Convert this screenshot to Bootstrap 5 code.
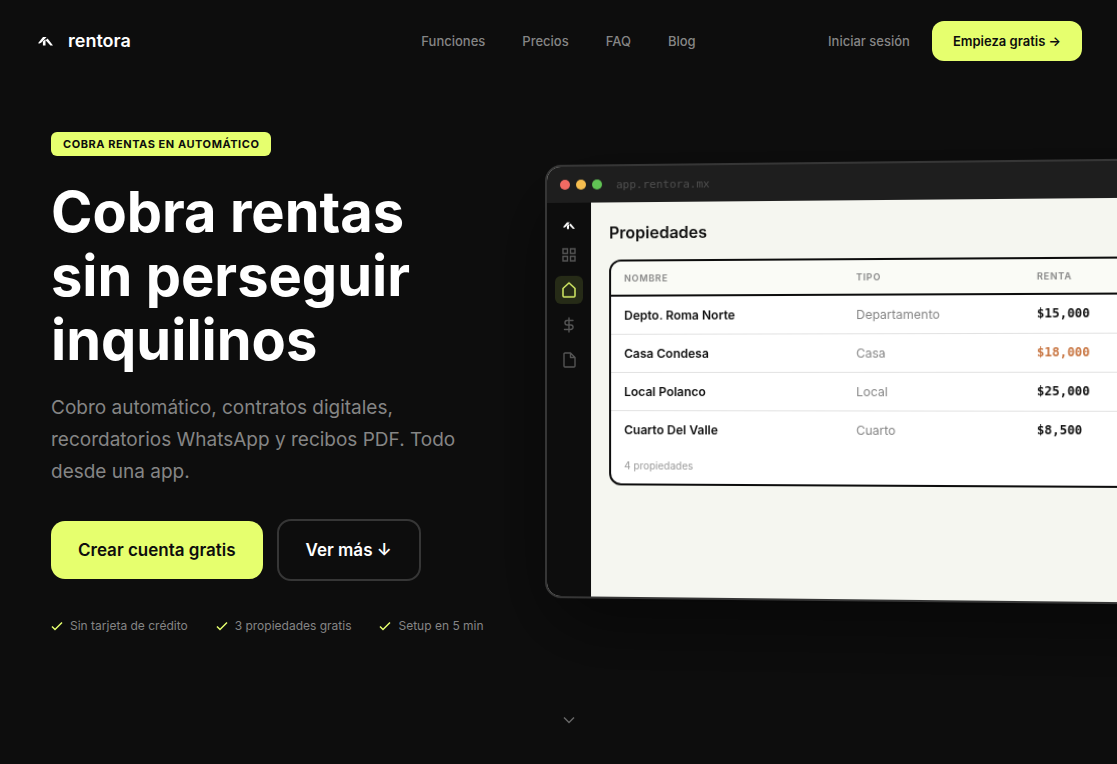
<!DOCTYPE html>
<html lang="es">
<head>
<meta charset="utf-8">
<meta name="viewport" content="width=device-width, initial-scale=1">
<title>Rentora</title>
<link href="https://cdn.jsdelivr.net/npm/bootstrap@5.3.0/dist/css/bootstrap.min.css" rel="stylesheet">
<style>
:root { --ink: #0d0d0d; --lime: #e6ff6e; --paper: #f5f6f0; --mute: #858585; }
body { background: var(--ink); color: #fff; font-family: Inter, sans-serif; }
a { text-decoration: none; }
svg { fill: none; stroke: currentColor; flex: none; display: block; }
.topbar { display: grid; grid-template-columns: 1fr auto 1fr; padding: 21px 35px; }
.topbar .nav-link { font-size: 13px; line-height: 20px; font-weight: 500; color: var(--mute); padding: 0; }
.topbar .nav-link:hover { color: #fff; }
.brandname { font-size: 18px; line-height: 24px; font-weight: 600; color: #fff; gap: 15px; padding-left: 3px; }
.btn-lime { --bs-btn-bg: var(--lime); --bs-btn-color: var(--ink); --bs-btn-hover-bg: #d9f25f; --bs-btn-hover-color: var(--ink); --bs-btn-border-width: 0; font-weight: 600; }
.btn-cta { font-size: 13px; line-height: 20px; padding: 10px 21px; border-radius: 12px; }
.btn-hero { font-size: 17px; line-height: 26px; padding: 16px 27px; border-radius: 14px; font-weight: 600; }
.btn-ghost { --bs-btn-color: #fff; --bs-btn-border-color: #363636; --bs-btn-border-width: 2px; --bs-btn-hover-color: #fff; --bs-btn-hover-border-color: #666; }
.hero { padding: 48px 0 0 51px; }
.pitch { flex: 0 0 46.3%; }
.tagline { background: var(--lime); color: var(--ink); font-size: 11px; line-height: 24px; font-weight: 700; letter-spacing: 0.05em; border-radius: 6px; padding: 0 12px; }
.headline { font-size: 56px; line-height: 64px; font-weight: 700; margin: 24px 0 20px; }
.summary { font-size: 19px; line-height: 32px; color: var(--mute); max-width: 430px; margin-bottom: 31px; }
.perks { font-size: 12px; line-height: 20px; color: var(--mute); gap: 28px; margin-top: 35px; }
.perks li { gap: 7px; }
.perks svg { color: var(--lime); }
.stage { padding-top: 35px; min-width: 0; }
.appframe { width: 720px; height: 433px; border: 2px solid #363636; border-radius: 16px; overflow: hidden; transform: perspective(1200px) rotateY(-3.4deg); transform-origin: left center; box-shadow: 0 30px 80px rgba(0,0,0,.5); background: var(--paper); }
.titlebar { background: #1e1e1e; height: 36px; padding-left: 13px; gap: 6px; font: 11px "DejaVu Sans Mono", monospace; color: #505050; }
.dot { width: 10px; height: 10px; border-radius: 50%; }
.rail { background: var(--ink); color: #555; width: 44px; padding-top: 19px; gap: 7px; }
.railitem { width: 28px; height: 28px; border-radius: 6px; color: inherit; }
.railitem.active { background: #262b17; color: #d6ee66; }
.panel { padding: 18px; color: var(--ink); }
.panel h2 { font-size: 16px; line-height: 24px; font-weight: 600; margin-bottom: 15px; }
.listing { border: 2px solid var(--ink); border-radius: 12px; background: #fff; overflow: hidden; width: 640px; }
.listing table { width: 100%; table-layout: fixed; font-size: 12px; line-height: 17px; }
.listing th, .listing td { padding: 10px 0 10px 13px; font-weight: 400; }
.listing thead th { background: #fafbf6; border-bottom: 2px solid var(--ink); font-size: 9px; line-height: 13px; font-weight: 600; letter-spacing: 0.08em; color: var(--mute); }
.listing tbody tr + tr { border-top: 1px solid #e2e2e2; }
.listing tbody th { font-weight: 600; }
.listing tbody td { color: var(--mute); }
.listing td.rent { font-family: "DejaVu Sans Mono", monospace; font-weight: 700; color: var(--ink); }
.listing td.late { color: #c87541; }
.c-name { width: 228px; } .c-kind { width: 174px; }
.total { font-size: 10px; line-height: 16px; color: #999; padding: 9px 13px 10px; margin: 0; }
.scrolldown { padding: 80px 0 36px 20px; color: #666; }
</style>
</head>
<body>
<svg width="0" height="0" class="position-absolute" aria-hidden="true"><symbol id="roof" viewBox="0 0 15 9"><path fill="currentColor" stroke="none" d="M0 6.200 5 0h3.600L3.400 5.600 1.600 6.600zM4.900 4.400 7.500 2.200V8.600H4.900zM7.600 3.200 9.600 1.600 15 8.400h-2.600L9 4.800z"/></symbol></svg>
<header class="topbar align-items-center">
  <a href="#" class="brandname d-flex align-items-center"><svg width="15" height="9"><use href="#roof"/></svg>rentora</a>
  <nav class="nav" style="gap:37px" aria-label="Principal">
    <a class="nav-link" href="#funciones">Funciones</a><a class="nav-link" href="#precios">Precios</a><a class="nav-link" href="#faq">FAQ</a><a class="nav-link" href="#blog">Blog</a>
  </nav>
  <div class="d-flex align-items-center justify-content-end" style="gap:22px">
    <a class="nav-link" href="#login">Iniciar sesión</a>
    <button class="btn btn-lime btn-cta" type="button">Empieza gratis →</button>
  </div>
</header>
<main class="overflow-hidden">
<section class="hero d-flex align-items-start">
  <div class="pitch">
    <span class="tagline d-inline-block">COBRA RENTAS EN AUTOMÁTICO</span>
    <h1 class="headline">Cobra rentas<br>sin perseguir<br>inquilinos</h1>
    <p class="summary">Cobro automático, contratos digitales, recordatorios WhatsApp y recibos PDF. Todo desde una app.</p>
    <div class="d-flex align-items-center" style="gap:14px">
      <button class="btn btn-lime btn-hero" type="button">Crear cuenta gratis</button>
      <button class="btn btn-ghost btn-hero" type="button">Ver más ↓</button>
    </div>
    <ul class="perks list-unstyled d-flex mb-0">
      <li class="d-flex align-items-center"><svg width="12" height="10" viewBox="0 0 12 10"><path d="m1 5.500 3 3L11 1.500" stroke-width="1.500"/></svg>Sin tarjeta de crédito</li>
      <li class="d-flex align-items-center"><svg width="12" height="10" viewBox="0 0 12 10"><path d="m1 5.500 3 3L11 1.500" stroke-width="1.500"/></svg>3 propiedades gratis</li>
      <li class="d-flex align-items-center"><svg width="12" height="10" viewBox="0 0 12 10"><path d="m1 5.500 3 3L11 1.500" stroke-width="1.500"/></svg>Setup en 5 min</li>
    </ul>
  </div>
  <div class="stage">
    <div class="appframe d-flex flex-column">
      <div class="titlebar d-flex align-items-center flex-shrink-0">
        <span class="dot" style="background:#f16a63"></span><span class="dot" style="background:#f5bd4f"></span><span class="dot" style="background:#61c454"></span>
        <span class="ms-2">app.rentora.mx</span>
      </div>
      <div class="d-flex flex-grow-1">
        <nav class="rail d-flex flex-column align-items-center flex-shrink-0" aria-label="Aplicación">
          <svg width="12" height="8" class="text-white mb-1"><use href="#roof"/></svg>
          <a href="#panel" aria-label="Panel" class="railitem d-flex align-items-center justify-content-center"><svg width="14" height="14" viewBox="0 0 14 14" stroke-width="1.400"><path d="M1 1h4.500v4.500H1zM8.500 1H13v4.500H8.500zM1 8.500h4.500V13H1zM8.500 8.500H13V13H8.500z"/></svg></a>
          <a href="#propiedades" aria-label="Propiedades" class="railitem active d-flex align-items-center justify-content-center"><svg width="14" height="16" viewBox="0 0 14 16" stroke-width="1.500" stroke-linejoin="round"><path d="M1 6.500 7 1l6 5.500V14a1 1 0 0 1-1 1H2a1 1 0 0 1-1-1z"/></svg></a>
          <a href="#pagos" aria-label="Pagos" class="railitem d-flex align-items-center justify-content-center"><svg width="12" height="16" viewBox="0 0 12 16" stroke-width="1.400" stroke-linecap="round"><path d="M6 1v14M10 3.500H4.200a2.200 2.200 0 0 0 0 4.500h3.600a2.200 2.200 0 0 1 0 4.500H1.500"/></svg></a>
          <a href="#contratos" aria-label="Contratos" class="railitem d-flex align-items-center justify-content-center"><svg width="13" height="16" viewBox="0 0 13 16" stroke-width="1.400" stroke-linejoin="round"><path d="M7.500 1H2a1 1 0 0 0-1 1v12a1 1 0 0 0 1 1h9a1 1 0 0 0 1-1V5.500zV5.500H12"/></svg></a>
        </nav>
        <div class="panel flex-grow-1">
          <h2>Propiedades</h2>
          <div class="listing">
            <table>
              <colgroup><col class="c-name"><col class="c-kind"><col></colgroup>
              <thead><tr><th scope="col">NOMBRE</th><th scope="col">TIPO</th><th scope="col">RENTA</th></tr></thead>
              <tbody>
                <tr><th scope="row">Depto. Roma Norte</th><td>Departamento</td><td class="rent">$15,000</td></tr>
                <tr><th scope="row">Casa Condesa</th><td>Casa</td><td class="rent late">$18,000</td></tr>
                <tr><th scope="row">Local Polanco</th><td>Local</td><td class="rent">$25,000</td></tr>
                <tr><th scope="row">Cuarto Del Valle</th><td>Cuarto</td><td class="rent">$8,500</td></tr>
              </tbody>
            </table>
            <p class="total">4 propiedades</p>
          </div>
        </div>
      </div>
    </div>
  </div>
</section>
<a href="#funciones" class="scrolldown d-flex justify-content-center" aria-label="Bajar"><svg width="12" height="8" viewBox="0 0 12 8"><path d="m1 1.500 5 5 5-5" stroke-width="1.500"/></svg></a>
</main>
<script src="https://cdn.jsdelivr.net/npm/bootstrap@5.3.0/dist/js/bootstrap.bundle.min.js"></script>
</body>
</html>
